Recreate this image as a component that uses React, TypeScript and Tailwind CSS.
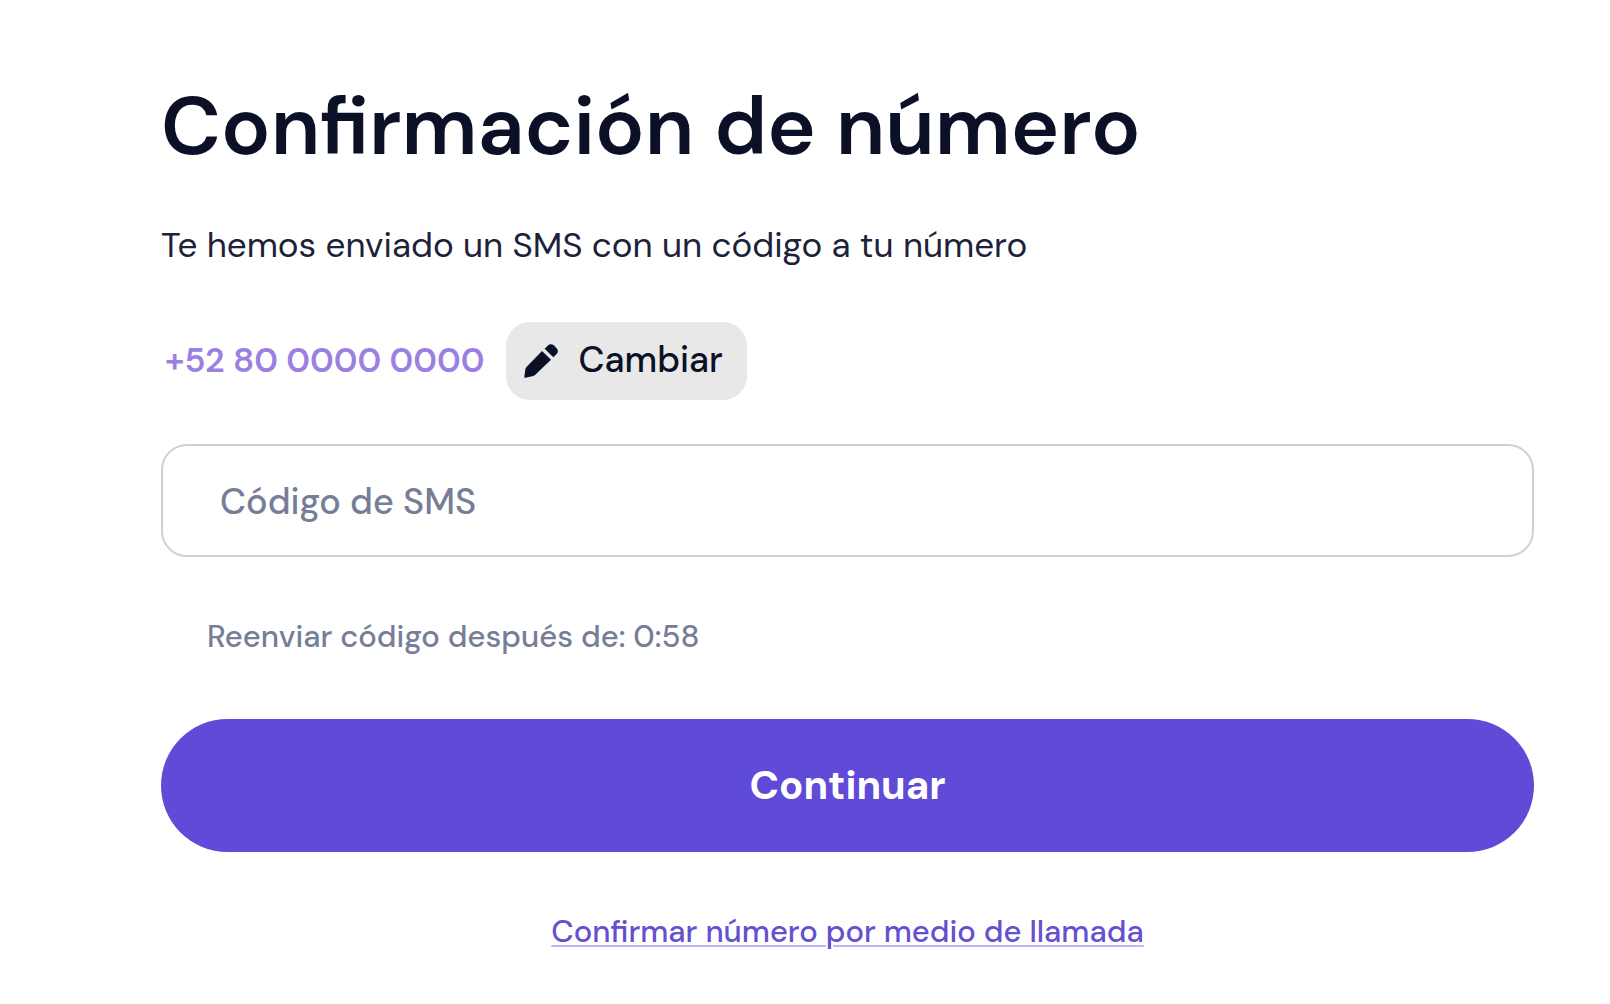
import { useState } from "react";

function PencilIcon() {
  return (
    <svg viewBox="0 0 102 102" className="h-[34px] w-[34px] shrink-0" fill="currentColor" aria-hidden="true">
      <path d="M1 98 L4 76 Q5 71 8 68 L54 21 L81 47 L33 93 Q30 96 25 97 L4 101 Q0 102 1 98 Z" />
      <path d="M62 14 L71 5 Q80 -3 89 4 L98 13 Q105 22 98 30 L88 40 Z" />
    </svg>
  );
}

export default function App() {
  const [code, setCode] = useState("");

  return (
    <main className="min-h-screen bg-white pt-20 pr-[76px] pb-12 pl-[10%] font-['DM_Sans','Inter',sans-serif] text-[#0b1027]">
      <form onSubmit={(e) => e.preventDefault()}>
        <h1 className="text-[82px] leading-[92px] font-semibold">Confirmación de número</h1>
        <p className="mt-12 text-[35px] leading-[50px] text-[#1d2239]">
          Te hemos enviado un SMS con un código a tu número
        </p>

        <div className="mt-[52px] flex items-center gap-[22px]">
          <span className="pl-1 text-[34px] leading-10 font-semibold text-[#9b80e2]">+52 80 0000 0000</span>
          <button
            type="button"
            className="flex h-[78px] items-center gap-5 rounded-3xl bg-[#e8e8e8] pr-6 pl-[18px] text-[36px] font-medium"
          >
            <PencilIcon />
            <span className="pb-0.5">Cambiar</span>
          </button>
        </div>

        <input
          type="text"
          inputMode="numeric"
          aria-label="Código de SMS"
          placeholder="Código de SMS"
          value={code}
          onChange={(e) => setCode(e.target.value)}
          className="mt-11 h-[113px] w-full rounded-[26px] border-2 border-[#ced1dd] bg-white px-[57px] pt-0.5 text-[36px] font-medium outline-none placeholder:text-[#767d97]"
        />
        <p className="mt-[60px] pl-[46px] text-[31px] leading-10 font-medium text-[#767d97]">
          Reenviar código después de: 0:58
        </p>

        <button
          type="submit"
          className="mt-[62px] h-[133px] w-full rounded-full bg-[#604bd9] pb-0.5 text-[40px] font-bold text-white"
        >
          Continuar
        </button>
        <div className="mt-[60px] text-center">
          <a
            href="#llamada"
            className="text-[31px] leading-10 font-medium text-[#6550cf] underline decoration-[#c1b6ef] decoration-2 underline-offset-3"
          >
            Confirmar número por medio de llamada
          </a>
        </div>
      </form>
    </main>
  );
}
